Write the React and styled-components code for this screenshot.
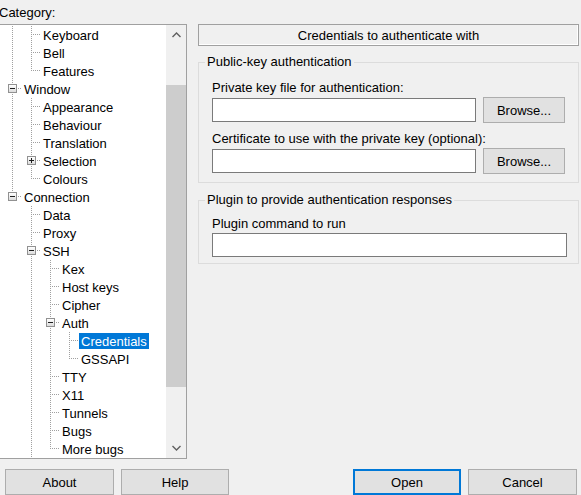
import React from 'react';
import styled, { createGlobalStyle, css } from 'styled-components';

const GlobalStyle = createGlobalStyle`
  html, body { margin: 0; padding: 0; background: #f0f0f0; }
  body {
    font-family: "Liberation Sans", Arial, sans-serif;
    font-size: 13px;
    color: #000;
    overflow: hidden;
  }
  * { box-sizing: border-box; }
`;

const DOT = '#a0a0a0';
const vFull = `repeating-linear-gradient(to bottom, ${DOT} 0 1px, transparent 1px 2px) 7px 0 / 1px 18px no-repeat`;
const vHalf = `repeating-linear-gradient(to bottom, ${DOT} 0 1px, transparent 1px 2px) 7px 0 / 1px 9px no-repeat`;
const hLine = `repeating-linear-gradient(to right, ${DOT} 0 1px, transparent 1px 2px) 9px 8px / 8px 1px no-repeat`;

const Dialog = styled.div`
  width: 581px;
  height: 495px;
  overflow: hidden;
  display: flex;
  flex-direction: column;
`;

const Main = styled.div`
  display: grid;
  grid-template-columns: 190px 381px;
  column-gap: 11px;
  margin-left: -3px;
  height: 459px;
`;

const LeftCol = styled.div`
  display: flex;
  flex-direction: column;
  padding-top: 4px;
`;

const CategoryLabel = styled.div`
  line-height: 18px;
  height: 16px;
  padding-left: 2px;
`;

const TreeBox = styled.div`
  margin-top: 4px;
  height: 435px;
  border: 1px solid #a0a0a0;
  background: #fff;
  display: flex;
`;

const TreeList = styled.div`
  flex: 1;
  padding: 1px 0 0 7px;
  overflow: hidden;
`;

const Row = styled.div`
  display: flex;
  height: 18px;
`;

const Guide = styled.span`
  flex: none;
  width: ${p => (p.$elbow ? 17 : 19)}px;
  height: 18px;
  display: flex;
  align-items: flex-start;
  padding: 4px 0 0 3px;
  background: ${p =>
    p.$elbow
      ? `${hLine}, ${p.$last ? vHalf : vFull}`
      : p.$cont
      ? vFull
      : 'none'};
`;

const Expander = styled.span`
  width: 9px;
  height: 9px;
  border: 1px solid #919191;
  background:
    linear-gradient(#1e1e1e, #1e1e1e) center / 5px 1px no-repeat,
    ${p => (p.$plus ? 'linear-gradient(#1e1e1e, #1e1e1e) center / 1px 5px no-repeat,' : '')}
    linear-gradient(#ffffff, #dcdcdc);
`;

const NodeLabel = styled.span`
  margin-top: 1px;
  height: 16px;
  line-height: 18px;
  padding: 0 2px;
  white-space: nowrap;
  ${p =>
    p.$selected &&
    css`
      background: #0078d7;
      color: #fff;
    `}
`;

const Scrollbar = styled.div`
  width: 20px;
  background: #f0f0f0;
  display: flex;
  flex-direction: column;
`;

const ArrowBtn = styled.div`
  height: 20px;
  display: flex;
  align-items: center;
  justify-content: center;
`;

const Track = styled.div`
  flex: 1;
  padding-top: 40px;
`;

const Thumb = styled.div`
  height: 302px;
  background: #cdcdcd;
`;

const RightCol = styled.div`
  padding-top: 24px;
  display: flex;
  flex-direction: column;
`;

const Header = styled.div`
  height: 22px;
  padding-top: 2px;
  border: 1px solid #a0a0a0;
  box-shadow: inset -1px -1px 0 #ffffff;
  display: flex;
  align-items: center;
  justify-content: center;
  line-height: 16px;
`;

const Group = styled.fieldset`
  margin: ${p => p.$mt}px 0 0;
  padding: ${p => p.$pt}px 11px ${p => p.$pb}px 13px;
  border: 1px solid #dcdcdc;
  min-width: 0;
  display: flex;
  flex-direction: column;
`;

const Legend = styled.legend`
  padding: 0 2px;
  margin-left: -7px;
  line-height: 18px;
`;

const FieldLabel = styled.div`
  line-height: 18px;
  height: 16px;
  margin-top: ${p => p.$mt || 0}px;
  margin-bottom: 2px;
`;

const InputRow = styled.div`
  display: flex;
  align-items: center;
  gap: 7px;
  height: 26px;
  margin-right: 2px;
`;

const TextInput = styled.div`
  flex: ${p => (p.$fixed ? 'none' : 1)};
  height: 24px;
  border: 1px solid #7a7a7a;
  background: #fff;
`;

const Button = styled.div`
  flex: none;
  width: ${p => p.$w}px;
  height: 26px;
  padding-top: 2px;
  background: #e1e1e1;
  border: ${p => (p.$default ? '2px solid #0078d7' : '1px solid #adadad')};
  display: flex;
  align-items: center;
  justify-content: center;
  line-height: 16px;
`;

const ButtonBar = styled.div`
  margin-top: 10px;
  display: flex;
  justify-content: space-between;
  padding: 0 4px 0 5px;
`;

const ButtonGroup = styled.div`
  display: flex;
  gap: 7px;
`;

const nodes = [
  { label: 'Keyboard', level: 1, cont: [true] },
  { label: 'Bell', level: 1, cont: [true] },
  { label: 'Features', level: 1, cont: [true], last: true },
  { label: 'Window', level: 0, cont: [], exp: 'minus' },
  { label: 'Appearance', level: 1, cont: [true] },
  { label: 'Behaviour', level: 1, cont: [true] },
  { label: 'Translation', level: 1, cont: [true] },
  { label: 'Selection', level: 1, cont: [true], exp: 'plus' },
  { label: 'Colours', level: 1, cont: [true], last: true },
  { label: 'Connection', level: 0, cont: [], last: true, exp: 'minus' },
  { label: 'Data', level: 1, cont: [false] },
  { label: 'Proxy', level: 1, cont: [false] },
  { label: 'SSH', level: 1, cont: [false], exp: 'minus' },
  { label: 'Kex', level: 2, cont: [false, true] },
  { label: 'Host keys', level: 2, cont: [false, true] },
  { label: 'Cipher', level: 2, cont: [false, true] },
  { label: 'Auth', level: 2, cont: [false, true], exp: 'minus' },
  { label: 'Credentials', level: 3, cont: [false, true, true], selected: true },
  { label: 'GSSAPI', level: 3, cont: [false, true, true], last: true },
  { label: 'TTY', level: 2, cont: [false, true] },
  { label: 'X11', level: 2, cont: [false, true] },
  { label: 'Tunnels', level: 2, cont: [false, true] },
  { label: 'Bugs', level: 2, cont: [false, true] },
  { label: 'More bugs', level: 2, cont: [false, true], last: true },
];

const Chevron = ({ up }) => (
  <svg width="9" height="6" viewBox="0 0 9 6">
    <polyline
      points={up ? '0.5,5 4.5,1 8.5,5' : '0.5,1 4.5,5 8.5,1'}
      fill="none"
      stroke="#606060"
      strokeWidth="1.4"
    />
  </svg>
);

export default function App() {
  return (
    <>
      <GlobalStyle />
      <Dialog>
        <Main>
          <LeftCol>
            <CategoryLabel>Category:</CategoryLabel>
            <TreeBox>
              <TreeList>
                {nodes.map(n => (
                  <Row key={n.label}>
                    {n.cont.map((c, i) => (
                      <Guide key={i} $cont={c} />
                    ))}
                    <Guide $elbow $last={n.last}>
                      {n.exp && <Expander $plus={n.exp === 'plus'} />}
                    </Guide>
                    <NodeLabel $selected={n.selected}>{n.label}</NodeLabel>
                  </Row>
                ))}
              </TreeList>
              <Scrollbar>
                <ArrowBtn><Chevron up /></ArrowBtn>
                <Track><Thumb /></Track>
                <ArrowBtn><Chevron /></ArrowBtn>
              </Scrollbar>
            </TreeBox>
          </LeftCol>
          <RightCol>
            <Header>Credentials to authenticate with</Header>
            <Group $mt={7} $pt={8} $pb={8}>
              <Legend>Public-key authentication</Legend>
              <FieldLabel>Private key file for authentication:</FieldLabel>
              <InputRow>
                <TextInput />
                <Button $w={82}>Browse...</Button>
              </InputRow>
              <FieldLabel $mt={7}>Certificate to use with the private key (optional):</FieldLabel>
              <InputRow>
                <TextInput />
                <Button $w={82}>Browse...</Button>
              </InputRow>
            </Group>
            <Group $mt={8} $pt={6} $pb={6}>
              <Legend>Plugin to provide authentication responses</Legend>
              <FieldLabel>Plugin command to run</FieldLabel>
              <TextInput $fixed />
            </Group>
          </RightCol>
        </Main>
        <ButtonBar>
          <ButtonGroup>
            <Button $w={109}>About</Button>
            <Button $w={108}>Help</Button>
          </ButtonGroup>
          <ButtonGroup>
            <Button $w={108} $default>Open</Button>
            <Button $w={109}>Cancel</Button>
          </ButtonGroup>
        </ButtonBar>
      </Dialog>
    </>
  );
}
